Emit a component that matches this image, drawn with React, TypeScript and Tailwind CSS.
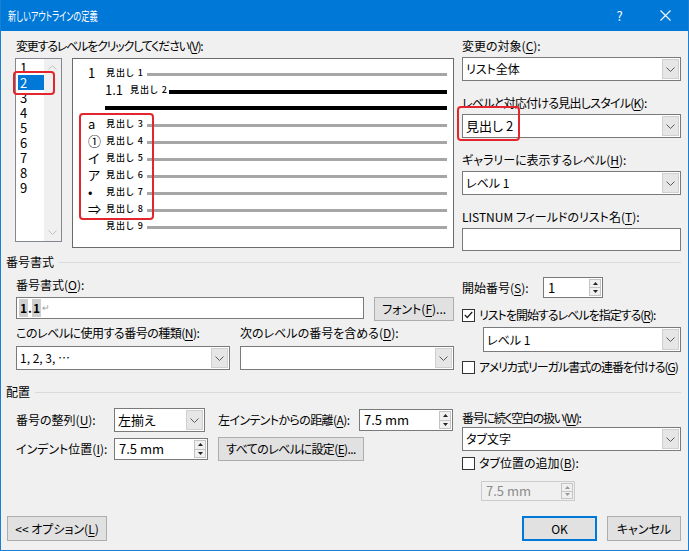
import React from "react";

const U = ({ c }: { c: string }) => (
  <span className="underline underline-offset-[2px]">{c}</span>
);

function Chevron({ color = "#5a5a5a" }: { color?: string }) {
  return (
    <svg width="9" height="5" viewBox="0 0 9 5">
      <path d="M0.5 0.5 L4.5 4.5 L8.5 0.5" fill="none" stroke={color} strokeWidth="1" />
    </svg>
  );
}

function Select({ value, className = "" }: { value?: React.ReactNode; className?: string }) {
  return (
    <div className={`flex bg-white border border-[#7a7a7a] ${className}`}>
      <div className="flex-1 flex items-center pl-[3px] whitespace-nowrap overflow-hidden text-[12px]">{value}</div>
      <div className="w-[17px] my-[1px] mr-[1px] bg-[#e6e6e6] border border-[#d0d0d0] flex items-center justify-center">
        <Chevron />
      </div>
    </div>
  );
}

function Spin({ value, className = "", disabled = false }: { value: string; className?: string; disabled?: boolean }) {
  const fill = disabled ? "#9a9a9a" : "#222222";
  return (
    <div
      className={`flex border ${disabled ? "border-[#cccccc] bg-[#f0f0f0] text-[#8c8c8c]" : "border-[#7a7a7a] bg-white text-black"} ${className}`}
    >
      <div className="flex-1 flex items-center pl-[4px] text-[13px] whitespace-nowrap">{value}</div>
      <div className="w-[12px] my-[1px] mr-[1px] flex flex-col border border-[#c4c4c4] bg-[#f0f0f0]">
        <div className="flex-1 flex items-center justify-center border-b border-[#c4c4c4]">
          <svg width="5" height="3" viewBox="0 0 5 3">
            <path d="M0 3 L2.5 0 L5 3Z" fill={fill} />
          </svg>
        </div>
        <div className="flex-1 flex items-center justify-center">
          <svg width="5" height="3" viewBox="0 0 5 3">
            <path d="M0 0 L2.5 3 L5 0Z" fill={fill} />
          </svg>
        </div>
      </div>
    </div>
  );
}

function Check({ checked = false }: { checked?: boolean }) {
  return (
    <div className="w-[13px] h-[13px] border border-[#333333] bg-white flex items-center justify-center shrink-0">
      {checked && (
        <svg width="9" height="8" viewBox="0 0 9 8">
          <path d="M0.8 4 L3.3 6.5 L8.2 1" fill="none" stroke="#222222" strokeWidth="1.3" />
        </svg>
      )}
    </div>
  );
}

function Btn({ children, className = "" }: { children: React.ReactNode; className?: string }) {
  return (
    <div className={`flex items-center justify-center bg-[#e1e1e1] text-[12px] whitespace-nowrap ${className}`}>
      {children}
    </div>
  );
}

const Line = ({ black = false }: { black?: boolean }) => (
  <div className={`flex-1 mt-[4px] ${black ? "h-[4px] bg-black" : "h-[3px] bg-[#a6a6a6]"}`} />
);

const Head = ({ n, w }: { n: number; w: string }) => (
  <span className={`text-[9px] leading-none tracking-[1px] whitespace-nowrap font-medium ${w}`}>見出し {n}</span>
);

function PreviewRow({ mark, n }: { mark: string; n: number }) {
  return (
    <div className="flex items-center h-[17px] pl-[15px]">
      <span className="w-[18px] text-[13px] leading-none">{mark}</span>
      <Head n={n} w="w-[41px]" />
      <Line />
    </div>
  );
}

function Section({ title }: { title: string }) {
  return (
    <div className="flex items-center h-[14px] leading-[14px]">
      <span className="text-[12px]">{title}</span>
      <div className="flex-1 h-px bg-[#dadada] ml-[5px]" />
    </div>
  );
}

export default function App() {
  return (
    <div className="w-[689px] h-[551px] bg-[#f0f0f0] flex flex-col border-x border-b border-[#1a7fd4] font-['Noto_Sans_CJK_JP',sans-serif] [font-feature-settings:'palt'] text-[12px] text-black overflow-hidden">
      {/* title bar */}
      <div className="h-[31px] shrink-0 bg-[#0078d7] flex items-center text-white">
        <div className="flex-1 pl-[7px] text-[12px] leading-none">
          <span className="inline-block origin-left scale-x-[0.68] whitespace-nowrap">新しいアウトラインの定義</span>
        </div>
        <div className="w-[45px] flex justify-center text-[13px] leading-none">?</div>
        <div className="w-[46px] flex justify-center">
          <svg width="11" height="11" viewBox="0 0 11 11">
            <path d="M0.5 0.5 L10.5 10.5 M10.5 0.5 L0.5 10.5" stroke="white" strokeWidth="1.1" />
          </svg>
        </div>
      </div>

      <div className="flex-1 flex flex-col pl-[5px] pr-[7px]">
        {/* top section */}
        <div className="h-[224px] pt-[8px] flex">
          <div className="ml-[10px] w-[438px] flex flex-col">
            <div className="leading-[14px] tracking-[-1.2px] whitespace-nowrap">
              変更するレベルをクリックしてください(<U c="V" />):
            </div>
            <div className="mt-[5px] flex items-start">
              {/* level list */}
              <div className="relative -ml-[1px] w-[47px] h-[184px] bg-white border border-[#828790] flex">
                <div className="flex-1 pt-[1px] pl-[2px] flex flex-col">
                  {[1, 2, 3, 4, 5, 6, 7, 8, 9].map((n) => (
                    <div
                      key={n}
                      className={`h-[15px] leading-[15px] pl-[2px] text-[13px] ${n === 2 ? "bg-[#0078d7] text-white" : ""}`}
                    >
                      {n}
                    </div>
                  ))}
                </div>
                <div className="w-[17px] bg-[#f0f0f0] flex flex-col justify-between items-center py-[6px]">
                  <svg width="9" height="5" viewBox="0 0 9 5">
                    <path d="M0.5 4.5 L4.5 0.5 L8.5 4.5" fill="none" stroke="#c2c2c2" strokeWidth="1" />
                  </svg>
                  <Chevron color="#c2c2c2" />
                </div>
                <div className="absolute left-[-3px] top-[12px] w-[42px] h-[24px] border-2 border-[#e3262d] rounded-[4px]" />
              </div>

              {/* preview */}
              <div className="relative ml-[10px] w-[382px] h-[190px] bg-white border border-[#6a6a6a] flex flex-col pt-[5px] pr-[6px]">
                <div className="flex items-center h-[17px] pl-[15px]">
                  <span className="w-[18px] text-[13px] leading-none">1</span>
                  <Head n={1} w="w-[41px]" />
                  <Line />
                </div>
                <div className="flex items-center h-[17px] pl-[32px]">
                  <span className="w-[25px] text-[13px] leading-none">1.1</span>
                  <Head n={2} w="w-[39px]" />
                  <Line black />
                </div>
                <div className="flex items-center h-[17px] pl-[32px]">
                  <div className="flex-1 h-[4px] bg-black mt-[3px]" />
                </div>
                <PreviewRow mark="a" n={3} />
                <PreviewRow mark="①" n={4} />
                <PreviewRow mark="イ" n={5} />
                <PreviewRow mark="ア" n={6} />
                <PreviewRow mark="•" n={7} />
                <PreviewRow mark="⇒" n={8} />
                <PreviewRow mark="" n={9} />
                <div className="absolute left-[6px] top-[54px] w-[75px] h-[107px] border-2 border-[#e3262d] rounded-[4px]" />
              </div>
            </div>
          </div>

          {/* right column */}
          <div className="ml-[8px] flex-1 flex flex-col gap-[15px]">
            <div className="flex flex-col">
              <div className="leading-[14px] mb-[4px]">
                変更の対象(<U c="C" />):
              </div>
              <Select value="リスト全体" className="h-[24px]" />
            </div>
            <div className="relative flex flex-col">
              <div className="leading-[14px] mb-[4px] tracking-[-0.75px] whitespace-nowrap">
                レベルと対応付ける見出しスタイル(<U c="K" />):
              </div>
              <Select value={<span className="text-[13px]">見出し 2</span>} className="h-[24px]" />
              <div className="absolute left-[-5px] top-[10px] w-[63px] h-[35px] border-2 border-[#e3262d] rounded-[4px]" />
            </div>
            <div className="flex flex-col">
              <div className="leading-[14px] mb-[4px]">
                ギャラリーに表示するレベル(<U c="H" />):
              </div>
              <Select value="レベル 1" className="h-[24px]" />
            </div>
            <div className="flex flex-col">
              <div className="leading-[14px] mb-[4px]">
                LISTNUM フィールドのリスト名(<U c="T" />):
              </div>
              <div className="h-[23px] bg-white border border-[#7a7a7a]" />
            </div>
          </div>
        </div>

        {/* 番号書式 */}
        <Section title="番号書式" />
        <div className="h-[116px] flex">
          <div className="ml-[10px] w-[438px] flex flex-col">
            <div className="mt-[9px] leading-[14px]">
              番号書式(<U c="O" />):
            </div>
            <div className="mt-[5px] flex items-start">
              <div className="w-[349px] h-[22px] bg-white border border-[#7a7a7a] flex items-center pl-[2px] text-[12px] font-semibold">
                <span className="bg-[#cfcfcf] px-[1px]">1</span>
                <span>.</span>
                <span className="bg-[#cfcfcf] px-[1px]">1</span>
                <span className="text-[9px] text-[#9a9a9a] font-normal ml-[1px]">↵</span>
              </div>
              <Btn className="ml-[10px] w-[80px] h-[24px] border border-[#adadad]">
                フォント(<U c="F" />)...
              </Btn>
            </div>
            <div className="mt-[5px] flex">
              <div className="w-[214px] flex flex-col">
                <div className="leading-[14px] tracking-[-0.5px] whitespace-nowrap">
                  このレベルに使用する番号の種類(<U c="N" />):
                </div>
                <Select value="1, 2, 3, …" className="mt-[6px] h-[24px]" />
              </div>
              <div className="ml-[10px] w-[214px] flex flex-col">
                <div className="leading-[14px]">
                  次のレベルの番号を含める(<U c="D" />):
                </div>
                <Select className="mt-[6px] h-[24px]" />
              </div>
            </div>
          </div>

          <div className="ml-[8px] flex-1 flex flex-col">
            <div className="mt-[8px] flex items-center h-[21px]">
              <span className="w-[81px]">
                開始番号(<U c="S" />):
              </span>
              <Spin value="1" className="w-[60px] h-[21px]" />
            </div>
            <div className="mt-[10px] flex items-center h-[14px] leading-[14px] gap-[4px]">
              <Check checked />
              <span className="tracking-[-1px] whitespace-nowrap">
                リストを開始するレベルを指定する(<U c="R" />):
              </span>
            </div>
            <Select value="レベル 1" className="ml-[21px] mt-[5px] h-[25px]" />
            <div className="mt-[8px] flex items-center h-[14px] leading-[14px] gap-[4px]">
              <Check />
              <span className="tracking-[-1px] whitespace-nowrap">
                アメリカ式リーガル書式の連番を付ける(<U c="G" />)
              </span>
            </div>
          </div>
        </div>

        {/* 配置 */}
        <Section title="配置" />
        <div className="flex">
          <div className="ml-[10px] w-[438px] flex flex-col">
            <div className="mt-[9px] flex items-center h-[24px]">
              <span className="w-[98px]">
                番号の整列(<U c="U" />):
              </span>
              <Select value={<span className="text-[13px]">左揃え</span>} className="w-[91px] h-[24px]" />
              <span className="ml-[13px] w-[141px] tracking-[-0.6px] whitespace-nowrap">
                左インテントからの距離(<U c="A" />):
              </span>
              <Spin value="7.5 mm" className="w-[94px] h-[22px]" />
            </div>
            <div className="mt-[5px] flex items-center h-[24px]">
              <span className="w-[98px]">
                インデント位置(<U c="I" />):
              </span>
              <Spin value="7.5 mm" className="w-[94px] h-[22px]" />
              <Btn className="ml-[10px] w-[146px] h-[24px] border border-[#adadad] tracking-[-0.6px]">
                すべてのレベルに設定(<U c="E" />)...
              </Btn>
            </div>
          </div>
          <div className="ml-[8px] flex-1 flex flex-col">
            <div className="mt-[12px] leading-[14px] tracking-[-1.3px] whitespace-nowrap">
              番号に続く空白の扱い(<U c="W" />):
            </div>
            <Select value="タブ文字" className="mt-[2px] h-[24px]" />
            <div className="mt-[5px] flex items-center h-[14px] leading-[14px] gap-[4px]">
              <Check />
              <span>
                タブ位置の追加(<U c="B" />):
              </span>
            </div>
            <Spin value="7.5 mm" disabled className="ml-[19px] mt-[11px] w-[94px] h-[20px]" />
          </div>
        </div>

        {/* bottom buttons */}
        <div className="mt-auto mb-[9px] flex items-center">
          <Btn className="ml-[1px] w-[100px] h-[25px] border border-[#adadad]">
            &lt;&lt; オプション(<U c="L" />)
          </Btn>
          <div className="flex-1" />
          <Btn className="w-[75px] h-[25px] border-2 border-[#0078d7]">OK</Btn>
          <Btn className="ml-[10px] w-[74px] h-[25px] border border-[#adadad]">キャンセル</Btn>
        </div>
      </div>
    </div>
  );
}
